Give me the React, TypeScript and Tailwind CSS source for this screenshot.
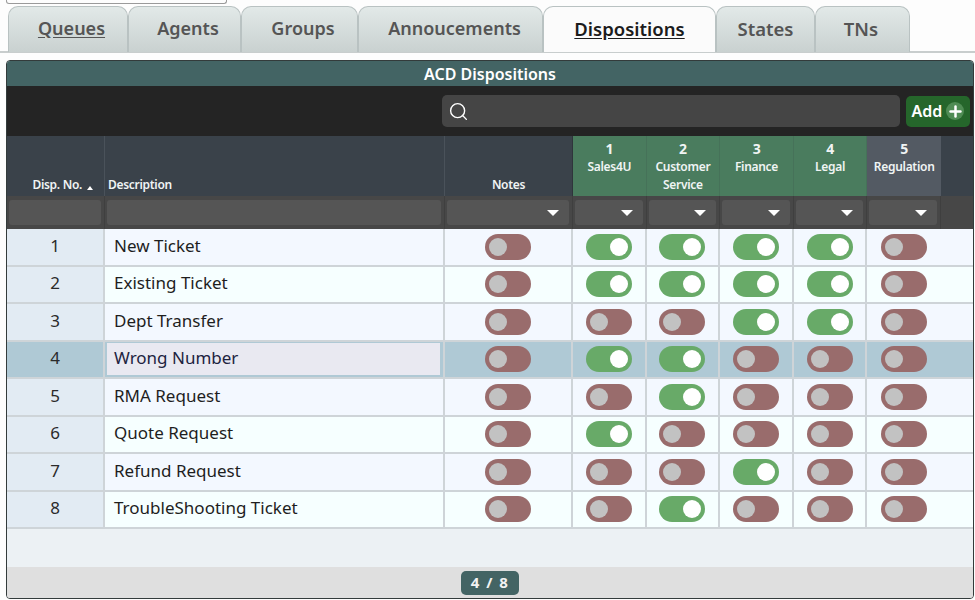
import { Search, Plus } from "lucide-react";

const font = "font-['Noto_Sans',sans-serif]";

const tabs = [
  { name: "Queues", w: "w-[120px] pl-[7px] text-[18px]", under: true },
  { name: "Agents", w: "w-[113px] pl-[7px] text-[18px]" },
  { name: "Groups", w: "w-[117px] pl-[7px] text-[18px]" },
  { name: "Annoucements", w: "w-[185px] pl-[8px] text-[18px]" },
  { name: "Dispositions", w: "w-[173px] text-[18.5px]", active: true },
  { name: "States", w: "w-[99px] text-[18.5px]" },
  { name: "TNs", w: "w-[95px] pr-[3px] text-[18.5px]" },
];

const groups = [
  { id: 1, lines: ["Sales4U"], on: true },
  { id: 2, lines: ["Customer", "Service"], on: true },
  { id: 3, lines: ["Finance"], on: true },
  { id: 4, lines: ["Legal"], on: true },
  { id: 5, lines: ["Regulation"], on: false },
];

const rows: { no: number; desc: string; flags: number[] }[] = [
  { no: 1, desc: "New Ticket", flags: [1, 1, 1, 1, 0] },
  { no: 2, desc: "Existing Ticket", flags: [1, 1, 1, 1, 0] },
  { no: 3, desc: "Dept Transfer", flags: [0, 0, 1, 1, 0] },
  { no: 4, desc: "Wrong Number", flags: [1, 1, 0, 0, 0] },
  { no: 5, desc: "RMA Request", flags: [0, 1, 0, 0, 0] },
  { no: 6, desc: "Quote Request", flags: [1, 0, 0, 0, 0] },
  { no: 7, desc: "Refund Request", flags: [0, 0, 1, 0, 0] },
  { no: 8, desc: "TroubleShooting Ticket", flags: [0, 1, 0, 0, 0] },
];

const cols = "grid grid-cols-[98px_340px_128px_73.6px_73.6px_73.6px_73.6px_73.6px_1fr]";

const Toggle = ({ on }: { on: boolean }) => (
  <div
    className={`flex h-[26px] w-[46px] items-center rounded-full px-[4px] ${
      on ? "justify-end bg-[#68aa68]" : "justify-start bg-[#996c6c]"
    }`}
  >
    <div
      className={`h-[18px] w-[18px] rounded-full ${on ? "bg-white" : "bg-[#c2c2c2]"}`}
    />
  </div>
);

const Filter = ({ arrow }: { arrow?: boolean }) => (
  <div className="flex h-full items-center border-r border-[#3f3f3f] bg-[#474747] pl-[2px] pr-[3px]">
    <div className="flex h-[25px] w-full items-center justify-end rounded-[3px] bg-[#555555] pr-[10px]">
      {arrow && (
        <div className="h-0 w-0 border-x-[6px] border-t-[6px] border-x-transparent border-t-white" />
      )}
    </div>
  </div>
);

const App = () => {
  return (
    <div className={`${font} flex h-[600px] w-[975px] flex-col overflow-hidden bg-[#fdfdfd]`}>
      <div className="ml-[6px] h-[4px] w-[221px] rounded-b-[3px] border border-t-0 border-[#9a9a9a]" />

      <div className="mt-[2px] flex h-[47px] border-b-2 border-[#c8cdcd] pl-[8px]">
        {tabs.map((t) => (
          <div
            key={t.name}
            className={`flex h-[46px] items-center justify-center rounded-t-[10px] border border-b-0 border-[#b9c2c2] pb-[2px] font-semibold ${t.w} ${
              t.active
                ? "bg-[#fbfbfb] text-[#1c1c1c]"
                : "bg-gradient-to-b from-[#e2e9e8] to-[#c9d1d0] text-[#555555]"
            }`}
          >
            <span className={t.under || t.active ? "underline underline-offset-2" : ""}>
              {t.name}
            </span>
          </div>
        ))}
      </div>

      <div className="ml-[6px] mt-[7px] flex h-[539px] w-[968px] flex-col overflow-hidden rounded-[4px] border border-[#333b3b] bg-[#ecf1f4]">
        <div className="flex h-[25px] items-center justify-center bg-[#436464] text-[16px] font-semibold text-white">
          ACD Dispositions
        </div>

        <div className="flex h-[50px] items-center bg-[#242424] pl-[435px] pr-[3px]">
          <div className="flex h-[32px] w-[458px] items-center rounded-[5px] bg-[#454545] pl-[6px]">
            <Search size={21} strokeWidth={1.6} color="#ffffff" />
          </div>
          <div className="ml-[6px] flex h-[31px] w-[64px] items-center justify-center gap-[4px] rounded-[5px] bg-[#25662b] text-[16px] font-semibold text-white">
            Add
            <span className="flex h-[18px] w-[18px] items-center justify-center rounded-full bg-[#4f8c54]">
              <Plus size={17} strokeWidth={3.5} color="#ffffff" />
            </span>
          </div>
        </div>

        <div className={`${cols} h-[60px] bg-[#3a424a] text-[12px] font-semibold leading-[18px] tracking-[-0.3px] text-[#f0f4f4]`}>
          <div className="flex items-end justify-end border-r border-[#4a525a] pb-[2px] pr-[11px]">
            Disp. No.
            <span className="mb-[4px] ml-[5px] h-0 w-0 border-x-[3px] border-b-[4px] border-x-transparent border-b-white" />
          </div>
          <div className="flex items-end border-r border-[#4a525a] pb-[2px] pl-[3px]">Description</div>
          <div className="flex items-end justify-center border-r border-[#2f353b] pb-[2px]">Notes</div>
          {groups.map((g) => (
            <div
              key={g.id}
              className={`flex flex-col items-center pt-[4px] ${
                g.on ? "border-r border-[#467259] bg-[#4a7c5e]" : "bg-[#535a63]"
              }`}
            >
              <span className="text-[14px] font-bold">{g.id}</span>
              {g.lines.map((l) => (
                <span key={l}>{l}</span>
              ))}
            </div>
          ))}
          <div />
        </div>

        <div className={`${cols} h-[33px] bg-[#474747]`}>
          <Filter />
          <Filter />
          <Filter arrow />
          {groups.map((g) => (
            <Filter key={g.id} arrow />
          ))}
          <div />
        </div>

        {rows.map((r, i) => {
          const selected = r.no === 4;
          const bg = selected ? "bg-[#afc9d5]" : i % 2 === 0 ? "bg-[#f3f8ff]" : "bg-[#f6ffff]";
          return (
            <div key={r.no} className={`${cols} ${bg} h-[37.5px] border-b-2 border-[#ced4d8] text-[17px] text-[#1e1e1e]`}>
              <div
                className={`flex items-center justify-center border-r-2 border-[#ced4d8] pb-[3px] text-[#2a2a2a] ${
                  selected ? "" : "bg-[#e2ebf3]"
                }`}
              >
                {r.no}
              </div>
              <div className="flex items-center border-r-2 border-[#ced4d8] pl-[2px] pr-[3px]">
                <div
                  className={`flex h-[32px] w-full items-center pb-[3px] pl-[7px] ${
                    selected ? "bg-[#e9e9f1] text-[#1d2340]" : ""
                  }`}
                >
                  {r.desc}
                </div>
              </div>
              <div className="flex items-center justify-center border-r-2 border-[#ced4d8]">
                <Toggle on={false} />
              </div>
              {r.flags.map((f, j) => (
                <div
                  key={j}
                  className={`flex items-center justify-center ${j < 4 ? "border-r-2 border-[#ced4d8]" : ""}`}
                >
                  <Toggle on={f === 1} />
                </div>
              ))}
              <div />
            </div>
          );
        })}

        <div className="flex-1" />

        <div className="flex h-[31px] items-center justify-center bg-[#dfdfdf]">
          <div className="flex h-[24px] w-[58px] items-center justify-center rounded-[5px] bg-[#436464] text-[15px] font-bold tracking-[1.5px] text-[#f2f2f2]">
            4 / 8
          </div>
        </div>
      </div>
    </div>
  );
};

export default App;
